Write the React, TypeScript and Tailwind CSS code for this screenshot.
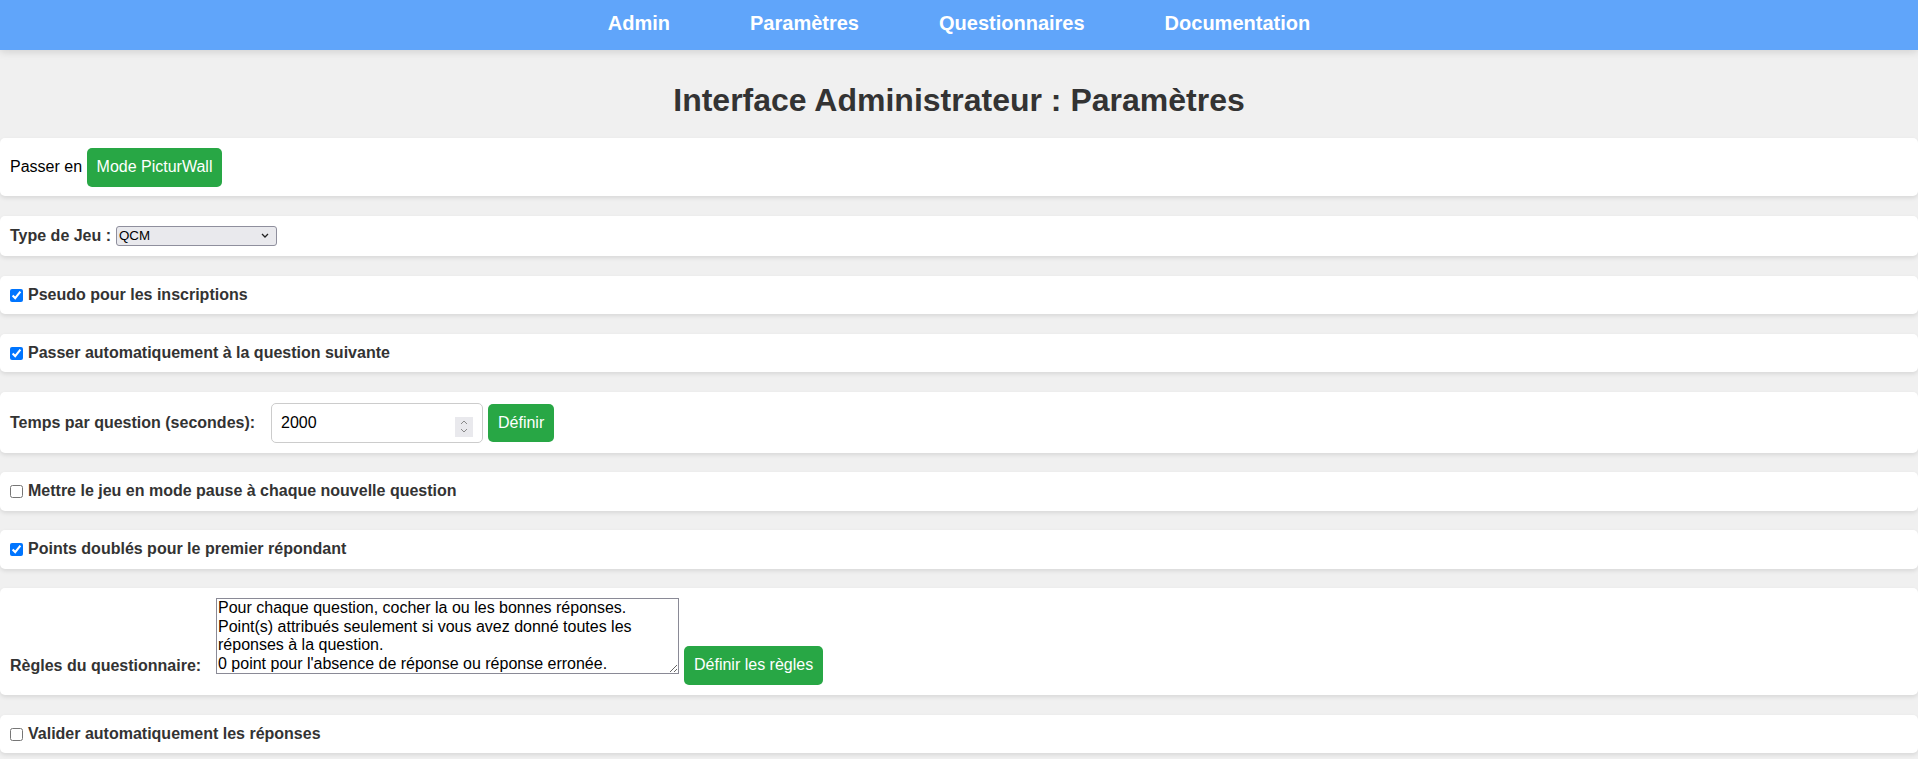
import { useState } from 'react'

const navLinks = ['Admin', 'Paramètres', 'Questionnaires', 'Documentation']

const defaultRules =
  "Pour chaque question, cocher la ou les bonnes réponses.\nPoint(s) attribués seulement si vous avez donné toutes les réponses à la question.\n0 point pour l'absence de réponse ou réponse erronée."

function Card({ children, className = '' }: { children: React.ReactNode; className?: string }) {
  return (
    <div className={`bg-white rounded-[5px] shadow-[0_2px_4px_rgba(0,0,0,0.1)] px-[10px] ${className}`}>
      {children}
    </div>
  )
}

function CheckRow({ label, checked }: { label: string; checked: boolean }) {
  const [value, setValue] = useState(checked)
  return (
    <Card className="py-[10px]">
      <label className="flex items-center h-[18.5px] font-bold text-[#333]">
        <input
          type="checkbox"
          checked={value}
          onChange={(e) => setValue(e.target.checked)}
          className="m-0 mr-[5px] w-[13px] h-[13px] shrink-0"
        />
        {label}
      </label>
    </Card>
  )
}

function GreenButton({ children, className = '' }: { children: React.ReactNode; className?: string }) {
  return (
    <button className={`bg-[#28a745] text-white rounded-[5px] px-[10px] py-[10px] leading-[18.4px] text-[16px] whitespace-nowrap hover:bg-[#218838] ${className}`}>
      {children}
    </button>
  )
}

export default function App() {
  const [gameType, setGameType] = useState('QCM')
  const [time, setTime] = useState('2000')
  const [rules, setRules] = useState(defaultRules)

  return (
    <div className="min-h-screen bg-[#f0f0f0] font-['Liberation_Sans',Arial,sans-serif] text-[16px] leading-[18.4px] text-black">
      {/* Navigation */}
      <nav className="relative z-10 h-[50px] bg-[#60a5fa] shadow-[0_2px_8px_rgba(0,0,0,0.13)] flex items-center justify-center gap-[80px] pb-[3px]">
        {navLinks.map((link) => (
          <a key={link} href="#" className="text-white font-bold text-[20px] leading-[23px]">
            {link}
          </a>
        ))}
      </nav>

      <h1 className="pt-[32px] mb-[19.5px] text-center text-[32px] leading-[36.8px] font-bold text-[#333]">
        Interface Administrateur : Paramètres
      </h1>

      <div className="flex flex-col gap-[19.5px] pb-[20px]">
        {/* Mode */}
        <Card className="py-[10px]">
          <div className="flex items-center h-[38px]">
            <span className="mr-[4.5px]">Passer en</span>
            <GreenButton>Mode PicturWall</GreenButton>
          </div>
        </Card>

        {/* Type de jeu */}
        <Card className="py-[10px]">
          <div className="flex items-center h-[20.5px]">
            <label className="w-[106px] shrink-0 font-bold text-[#333]">Type de Jeu :</label>
            <div className="relative w-[161px] h-[20px]">
              <select
                value={gameType}
                onChange={(e) => setGameType(e.target.value)}
                className="appearance-none w-full h-full bg-[#e9e9ed] border border-[#8f8f9d] rounded-[3px] pl-[2px] text-[13.33px] leading-[16px] text-black"
              >
                <option value="QCM">QCM</option>
                <option value="VraiFaux">Vrai / Faux</option>
              </select>
              <svg className="absolute right-[8px] top-[7px] pointer-events-none" width="8" height="5" viewBox="0 0 8 5">
                <path d="M1 1l3 3 3-3" fill="none" stroke="#222" strokeWidth="1.3" />
              </svg>
            </div>
          </div>
        </Card>

        <CheckRow label="Pseudo pour les inscriptions" checked />
        <CheckRow label="Passer automatiquement à la question suivante" checked />

        {/* Temps */}
        <Card className="pt-[11px] pb-[10px]">
          <div className="flex items-center h-[40px]">
            <label className="w-[261px] shrink-0 font-bold text-[#333]">Temps par question (secondes):</label>
            <div className="relative w-[212px] h-[40px]">
              <input
                type="number"
                value={time}
                onChange={(e) => setTime(e.target.value)}
                className="w-full h-full border border-[#ccc] rounded-[5px] px-[9px] text-[16px] text-black [appearance:textfield] [&::-webkit-inner-spin-button]:appearance-none [&::-webkit-outer-spin-button]:appearance-none"
              />
              <div className="absolute left-[184px] top-[14px] w-[18px] h-[20px] bg-[#e9e9ed] flex flex-col items-center justify-center gap-[3px] pointer-events-none">
                <svg width="8" height="5" viewBox="0 0 8 5">
                  <path d="M1 4l3-3 3 3" fill="none" stroke="#8a8a8a" strokeWidth="1" />
                </svg>
                <svg width="8" height="5" viewBox="0 0 8 5">
                  <path d="M1 1l3 3 3-3" fill="none" stroke="#8a8a8a" strokeWidth="1" />
                </svg>
              </div>
            </div>
            <GreenButton className="ml-[5px]">Définir</GreenButton>
          </div>
        </Card>

        <CheckRow label="Mettre le jeu en mode pause à chaque nouvelle question" checked={false} />
        <CheckRow label="Points doublés pour le premier répondant" checked />

        {/* Règles */}
        <Card className="pt-[10px] pb-[10.5px]">
          <div className="flex items-end">
            <label className="w-[206px] shrink-0 mb-[9px] font-bold text-[#333]">Règles du questionnaire:</label>
            <textarea
              value={rules}
              onChange={(e) => setRules(e.target.value)}
              rows={4}
              className="w-[463px] h-[76px] mb-[10.5px] border border-[#8a8a96] px-[1px] py-0 text-[16px] leading-[18.4px] text-black overflow-hidden"
            />
            <GreenButton className="ml-[5px]">Définir les règles</GreenButton>
          </div>
        </Card>

        <CheckRow label="Valider automatiquement les réponses" checked={false} />
      </div>
    </div>
  )
}
